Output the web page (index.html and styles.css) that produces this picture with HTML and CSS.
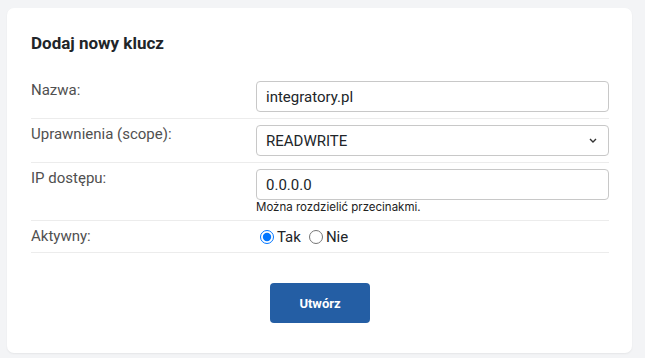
FILE: index.html
```html
<!DOCTYPE html>
<html lang="pl">
<head>
    <meta charset="UTF-8">
    <meta name="viewport" content="width=device-width, initial-scale=1.0">
    <title>Dodaj nowy klucz</title>
    <link rel="stylesheet" href="styles.css">
</head>
<body>

    <!-- Key form card -->
    <div class="card">
        <h2 class="card-title">Dodaj nowy klucz</h2>
        <form id="newkey">
            <div class="form-row">
                <label for="name">Nazwa:</label>
                <div class="field">
                    <input type="text" id="name" value="integratory.pl">
                </div>
            </div>
            <div class="form-row">
                <label for="scope">Uprawnienia (scope):</label>
                <div class="field">
                    <div class="select-wrap">
                        <select id="scope">
                            <option>READ</option>
                            <option selected>READWRITE</option>
                        </select>
                        <svg class="chevron" width="8" height="5" viewBox="0 0 8 5"><path d="M1 1 4 4 7 1" fill="none" stroke="#333" stroke-width="1.4"/></svg>
                    </div>
                </div>
            </div>
            <div class="form-row">
                <label for="ip">IP dostępu:</label>
                <div class="field">
                    <input type="text" id="ip" value="0.0.0.0">
                    <small class="help">Można rozdzielić przecinakmi.</small>
                </div>
            </div>
            <div class="form-row">
                <label>Aktywny:</label>
                <div class="field radios">
                    <label class="radio"><input type="radio" name="active" checked>Tak</label>
                    <label class="radio"><input type="radio" name="active">Nie</label>
                </div>
            </div>
            <div class="actions">
                <button type="button">Utwórz</button>
            </div>
        </form>
    </div>

</body>
</html>
```

FILE: styles.css
```css
/* General Styling */
body {
    font-family: Roboto, Arial, sans-serif;
    margin: 0;
    padding: 8px 13px 5px 7px;
    background-color: #f3f4f6;
}

/* Card */
.card {
    background: #ffffff;
    border-radius: 7px;
    padding: 25px 23px 30px 24px;
    box-shadow: 0 1px 2px rgba(0, 0, 0, 0.06);
}

.card-title {
    margin: 0 0 22px;
    font-size: 17px;
    line-height: 20px;
    font-weight: 700;
    color: #212529;
}

/* Form rows */
.form-row {
    display: grid;
    grid-template-columns: 225px 1fr;
    padding: 6px 0;
    border-bottom: 1px solid #ececec;
}

.form-row > label {
    font-size: 15px;
    line-height: 19px;
    color: #505050;
}

.field {
    display: flex;
    flex-direction: column;
}

input[type="text"], select {
    height: 31px;
    box-sizing: border-box;
    width: 100%;
    border: 1px solid #c8c8c8;
    border-radius: 4px;
    padding: 0 10px 0 9px;
    font-family: Roboto, Arial, sans-serif;
    font-size: 15px;
    color: #212529;
    background: #fff;
    outline: none;
}

.select-wrap {
    position: relative;
}

select {
    appearance: none;
    -webkit-appearance: none;
}

.chevron {
    position: absolute;
    right: 12px;
    top: 13px;
    pointer-events: none;
}

.help {
    font-family: Inter, Arial, sans-serif;
    font-size: 11.5px;
    line-height: 14px;
    color: #222;
}

/* Radios */
.radios {
    flex-direction: row;
    align-items: center;
    height: 19px;
}

.radio {
    font-size: 15px;
    color: #212529;
    display: flex;
    align-items: center;
}

.radio input {
    margin: 0 3px 0 4px;
    width: 14px;
    height: 14px;
}

.radio + .radio input {
    margin-left: 8px;
}

/* Submit */
.actions {
    display: flex;
    justify-content: center;
    padding-top: 30px;
}

button {
    width: 100px;
    height: 40px;
    border: none;
    border-radius: 4px;
    background-color: #245ea4;
    color: #fff;
    font-family: Roboto, Arial, sans-serif;
    font-size: 13px;
    font-weight: 700;
    cursor: pointer;
}
```
